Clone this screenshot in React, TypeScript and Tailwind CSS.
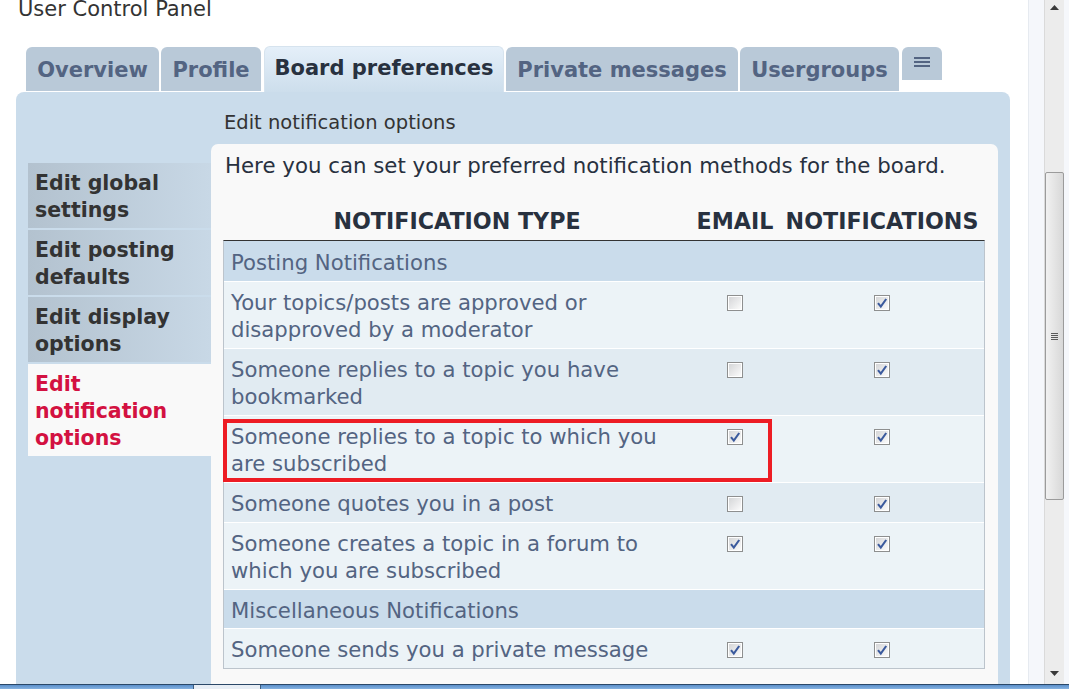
import React from "react";

type Row =
  | { kind: "section"; label: string }
  | { kind: "item"; lines: string[]; email: boolean; notif: boolean; bg: string; highlight?: boolean };

const rows: Row[] = [
  { kind: "section", label: "Posting Notifications" },
  { kind: "item", lines: ["Your topics/posts are approved or", "disapproved by a moderator"], email: false, notif: true, bg: "bg-[#ecf3f7]" },
  { kind: "item", lines: ["Someone replies to a topic you have", "bookmarked"], email: false, notif: true, bg: "bg-[#e1ebf2]" },
  { kind: "item", lines: ["Someone replies to a topic to which you", "are subscribed"], email: true, notif: true, bg: "bg-[#ecf3f7]", highlight: true },
  { kind: "item", lines: ["Someone quotes you in a post"], email: false, notif: true, bg: "bg-[#e1ebf2]" },
  { kind: "item", lines: ["Someone creates a topic in a forum to", "which you are subscribed"], email: true, notif: true, bg: "bg-[#ecf3f7]" },
  { kind: "section", label: "Miscellaneous Notifications" },
  { kind: "item", lines: ["Someone sends you a private message"], email: true, notif: true, bg: "bg-[#ecf3f7]" },
];

function Checkbox({ checked }: { checked: boolean }) {
  return (
    <span className="block w-[16px] h-[16px] border border-[#8e8f8f] bg-white p-[1px]">
      <span className="block w-full h-full bg-linear-to-br from-[#d5d6d8] to-[#fbfbfb]">
        {checked && (
          <svg viewBox="0 0 12 12" className="w-full h-full">
            <path d="M2 6.2 L4.8 9.6 L10.2 2" fill="none" stroke="#3b5a9d" strokeWidth="2.1" strokeLinejoin="miter" />
          </svg>
        )}
      </span>
    </span>
  );
}

const navItems = [
  { lines: ["Edit global", "settings"], active: false },
  { lines: ["Edit posting", "defaults"], active: false },
  { lines: ["Edit display", "options"], active: false },
  { lines: ["Edit", "notification", "options"], active: true },
];

export default function App() {
  return (
    <div className="w-[1069px] h-[689px] overflow-hidden bg-white flex flex-col font-['DejaVu_Sans',sans-serif]">
      <div className="flex flex-1 min-h-0">
        {/* page content */}
        <div className="w-[1028px] flex flex-col pl-[16px] overflow-hidden">
          <div className="h-[46px] shrink-0">
            <div className="pl-[2px] mt-[-1px] text-[21px] leading-[21px] text-[#333333]">User Control Panel</div>
          </div>

          {/* tabs */}
          <div className="h-[46px] shrink-0 flex items-end pl-[10px]">
            <div className="w-[133px] h-[44px] mb-[1px] rounded-t-[6px] bg-[#b9c9d8] pt-[10px] text-center text-[21px] leading-[27px] font-bold text-[#536482]">Overview</div>
            <div className="ml-[2px] w-[100px] h-[44px] mb-[1px] rounded-t-[6px] bg-[#b9c9d8] pt-[10px] text-center text-[21px] leading-[27px] font-bold text-[#536482]">Profile</div>
            <div className="ml-[3px] w-[240px] h-[46px] rounded-t-[6px] border border-b-0 border-[#d6e3ee] bg-linear-to-b from-[#e4eff9] to-[#cddeec] pt-[8px] text-center text-[21px] leading-[27px] font-bold text-[#28313f]">Board preferences</div>
            <div className="ml-[2px] w-[232px] h-[44px] mb-[1px] rounded-t-[6px] bg-[#b9c9d8] pt-[10px] text-center text-[21px] leading-[27px] font-bold text-[#536482]">Private messages</div>
            <div className="ml-[2px] w-[159px] h-[44px] mb-[1px] rounded-t-[6px] bg-[#b9c9d8] pt-[10px] text-center text-[21px] leading-[27px] font-bold text-[#536482]">Usergroups</div>
            <div className="ml-[3px] self-start mt-[1px] w-[40px] h-[33px] rounded-t-[6px] bg-[#b9c9d8] flex flex-col items-center pt-[10px] gap-[2px]">
              <span className="block w-[16px] h-[2px] bg-[#536482]" />
              <span className="block w-[16px] h-[2px] bg-[#536482]" />
              <span className="block w-[16px] h-[2px] bg-[#536482]" />
            </div>
          </div>

          {/* panel */}
          <div className="w-[994px] flex-1 bg-[#cadceb] rounded-t-[8px] flex px-[12px]">
            {/* left nav */}
            <div className="w-[183px] pt-[71px] flex flex-col gap-[2px]">
              {navItems.map((n, i) => (
                <div
                  key={i}
                  className={
                    n.active
                      ? "bg-[#f9f9f9] pl-[7px] pt-[7px] pb-[4px] text-[20.5px] leading-[27px] font-bold text-[#d31141]"
                      : "bg-linear-to-r from-[#b3c2cf] to-[#c8d8e6] pl-[7px] pt-[7px] pb-[4px] text-[20.5px] leading-[27px] font-bold text-[#333333]"
                  }
                >
                  {n.lines.map((l, j) => (
                    <div key={j}>{l}</div>
                  ))}
                </div>
              ))}
            </div>

            {/* right column */}
            <div className="flex-1 pt-[18px] flex flex-col">
              <div className="pl-[13px] h-[24px] text-[19.5px] leading-[25px] text-[#333333]">Edit notification options</div>
              <div className="mt-[10px] flex-1 bg-[#f9f9f9] rounded-t-[7px] pt-[8px]">
                <p className="pl-[14px] text-[21.3px] leading-[27px] text-[#28313f]">
                  Here you can set your preferred notification methods for the board.
                </p>
                <div className="ml-[12px] w-[762px]">
                  <div className="mt-[29px] mb-[5px] grid grid-cols-[468px_88px_206px] text-[22.2px] leading-[27px] font-bold text-[#28313f]">
                    <div className="text-center">NOTIFICATION TYPE</div>
                    <div className="text-center">EMAIL</div>
                    <div className="text-center">NOTIFICATIONS</div>
                  </div>
                  <div className="relative border-t border-t-[#333333] border-x border-b border-x-[#bcc4cc] border-b-[#bcc4cc]">
                    {rows.map((r, i) => {
                      if (r.kind === "section") {
                        return (
                          <div
                            key={i}
                            className={
                              (i === 0 ? "pt-[8px] pb-[5px]" : "border-t border-white pt-[7px] pb-[4px]") +
                              " bg-[#cadceb] pl-[7px] text-[21.2px] leading-[27px] text-[#536482]"
                            }
                          >
                            {r.label}
                          </div>
                        );
                      }
                      return (
                        <div key={i} className={"border-t border-white grid grid-cols-[467px_88px_1fr] " + r.bg}>
                          <div className="pl-[7px] pt-[7px] pb-[5px] text-[21.2px] leading-[27px] text-[#536482]">
                            {r.lines.map((l, j) => (
                              <div key={j}>{l}</div>
                            ))}
                          </div>
                          <div className="flex justify-center pt-[13px]">
                            <Checkbox checked={r.email} />
                          </div>
                          <div className="flex justify-center pt-[13px]">
                            <Checkbox checked={r.notif} />
                          </div>
                        </div>
                      );
                    })}
                    <div className="absolute left-[-1px] top-[178px] w-[549px] h-[63px] border-[4px] border-[#ed1c24]" />
                  </div>
                </div>
              </div>
            </div>
          </div>
        </div>

        {/* scrollbar region */}
        <div className="w-[41px] flex">
          <div className="w-[16px] bg-[#f5f7fb] border-l border-[#e6eaf0]" />
          <div className="w-[20px] bg-[#ececec] border-l border-[#dadada] flex flex-col items-center relative">
            <div className="pt-[5px]">
              <svg width="9" height="5" viewBox="0 0 9 5">
                <path d="M0 5 L4.5 0 L9 5 Z" fill="#3a3a3a" />
              </svg>
            </div>
            <div className="absolute left-0 top-[172px] w-[19px] h-[328px] rounded-[2px] border border-[#9b9b9b] bg-linear-to-r from-[#f1f1f1] to-[#d8d8d8] flex items-center justify-center">
              <div className="flex flex-col gap-[1px]">
                <span className="block w-[7px] h-[1px] bg-[#5a5a5a]" />
                <span className="block w-[7px] h-[1px] bg-[#5a5a5a]" />
                <span className="block w-[7px] h-[1px] bg-[#5a5a5a]" />
                <span className="block w-[7px] h-[1px] bg-[#5a5a5a]" />
              </div>
            </div>
            <div className="mt-auto pb-[8px]">
              <svg width="9" height="5" viewBox="0 0 9 5">
                <path d="M0 0 L9 0 L4.5 5 Z" fill="#3a3a3a" />
              </svg>
            </div>
          </div>
          <div className="w-[5px] bg-[#f5f7fb]" />
        </div>
      </div>

      {/* taskbar strip */}
      <div className="h-[5px] shrink-0 border-t border-[#2b4868] bg-linear-to-b from-[#5a8fca] to-[#86b2e0] flex">
        <div className="ml-[193px] w-[68px] h-full bg-[#e8eef5] border-x border-[#3d5d80]" />
      </div>
    </div>
  );
}
